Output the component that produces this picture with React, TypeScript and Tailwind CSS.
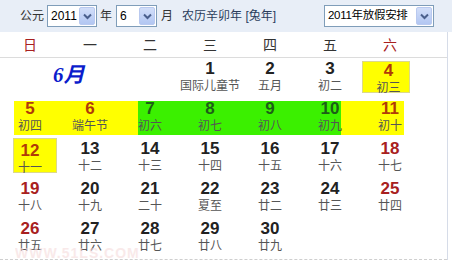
import React from "react";

type Cell = { d: number; l: string; kind?: "red" | "hl" | "green" };

const FONT = "font-['Liberation_Sans','Noto_Sans_CJK_SC',sans-serif]";

function Chevron() {
  return (
    <svg width="9" height="7" viewBox="0 0 9 7">
      <path d="M1 1.5 L4.5 5 L8 1.5" fill="none" stroke="#4a5f8c" strokeWidth="2" />
    </svg>
  );
}

function FakeSelect({ value, w, textSize }: { value: string; w: string; textSize: string }) {
  return (
    <div className={`flex h-[22px] items-center justify-between border border-[#7f9db9] bg-white pl-[3px] pr-[1px] ${w}`}>
      <span className={`whitespace-nowrap leading-none text-black ${textSize}`}>{value}</span>
      <span className="flex h-[18px] w-[16px] shrink-0 items-center justify-center rounded-[2px] border border-[#b9c9ef] bg-[linear-gradient(#d2def9,#b2c6f2)]">
        <Chevron />
      </span>
    </div>
  );
}

function numColor(c: Cell) {
  if (c.kind === "hl") return "text-[#b03a08]";
  if (c.kind === "green") return "text-[#1d5e18]";
  if (c.kind === "red") return "text-[#a82020]";
  return "text-[#222]";
}

function DayContent({ c }: { c: Cell }) {
  return (
    <>
      <span className={`text-[17px] font-bold leading-[18px] ${numColor(c)}`}>{c.d}</span>
      <span className="mt-[1px] text-[12px] leading-[14px] text-[#555]">{c.l}</span>
    </>
  );
}

function DayCell({ c }: { c: Cell }) {
  return (
    <div className="flex h-[40px] flex-col items-center pt-[2px]">
      <DayContent c={c} />
    </div>
  );
}

const row2: Cell[] = [
  { d: 5, l: "初四", kind: "hl" },
  { d: 6, l: "端午节", kind: "hl" },
  { d: 7, l: "初六", kind: "green" },
  { d: 8, l: "初七", kind: "green" },
  { d: 9, l: "初八", kind: "green" },
  { d: 10, l: "初九", kind: "green" },
  { d: 11, l: "初十", kind: "hl" },
];

const row3: Cell[] = [
  { d: 13, l: "十二" },
  { d: 14, l: "十三" },
  { d: 15, l: "十四" },
  { d: 16, l: "十五" },
  { d: 17, l: "十六" },
  { d: 18, l: "十七", kind: "red" },
];

const row4: Cell[] = [
  { d: 19, l: "十八", kind: "red" },
  { d: 20, l: "十九" },
  { d: 21, l: "二十" },
  { d: 22, l: "夏至" },
  { d: 23, l: "廿二" },
  { d: 24, l: "廿三" },
  { d: 25, l: "廿四", kind: "red" },
];

const row5: Cell[] = [
  { d: 26, l: "廿五", kind: "red" },
  { d: 27, l: "廿六" },
  { d: 28, l: "廿七" },
  { d: 29, l: "廿八" },
  { d: 30, l: "廿九" },
];

const weekdays = ["日", "一", "二", "三", "四", "五", "六"];

export default function App() {
  return (
    <div className={`relative h-[262px] w-[452px] overflow-hidden bg-white ${FONT}`}>
      {/* header bar */}
      <div className="flex h-[32px] items-center bg-[#e8eef7] pl-[20px] pr-[18px] text-[12px] text-[#333]">
        <span>公元</span>
        <div className="ml-[3px]">
          <FakeSelect value="2011" w="w-[50px]" textSize="text-[12px]" />
        </div>
        <span className="ml-[3px]">年</span>
        <div className="ml-[4px]">
          <FakeSelect value="6" w="w-[41px]" textSize="text-[12px]" />
        </div>
        <span className="ml-[4px]">月</span>
        <span className="ml-[9px] text-[#2b3d5c]">农历辛卯年 [兔年]</span>
        <div className="ml-auto">
          <FakeSelect value="2011年放假安排" w="w-[110px]" textSize="text-[11.5px] tracking-[-0.3px]" />
        </div>
      </div>

      {/* body */}
      <div className="w-[448px] border-r border-[#d6dce8]">
        <div className="grid h-[26px] grid-cols-[repeat(7,60px)] items-center border-b border-[#dcdcdc] text-[14px]">
          {weekdays.map((w, i) => (
            <div
              key={w}
              className={`text-center leading-none ${i === 0 || i === 6 ? "text-[#a82020]" : "text-[#333]"}`}
            >
              {w}
            </div>
          ))}
        </div>

        {/* row 1 */}
        <div className="grid h-[40px] grid-cols-[repeat(7,60px)]">
          <div className="col-span-3 pl-[53px] pt-[5px]">
            <span className="font-['Liberation_Serif','Noto_Sans_CJK_SC',serif] text-[21px] font-bold italic leading-[24px] text-[#0b1ccc]">
              6月
            </span>
          </div>
          <DayCell c={{ d: 1, l: "国际儿童节" }} />
          <DayCell c={{ d: 2, l: "五月" }} />
          <DayCell c={{ d: 3, l: "初二" }} />
          <div className="pt-[3px]">
            <div className="ml-[2px] flex h-[32px] w-[48px] flex-col items-center border border-[#dcd98a] bg-[#ffff00] pl-[5px]">
              <DayContent c={{ d: 4, l: "初三", kind: "hl" }} />
            </div>
          </div>
        </div>

        {/* row 2 */}
        <div className="grid h-[40px] grid-cols-[repeat(7,60px)] bg-[linear-gradient(to_right,transparent_14px,#ffff00_14px,#ffff00_138px,#3bf000_138px,#3bf000_341px,#ffff00_341px,#ffff00_404px,transparent_404px)] bg-[length:100%_34px] bg-[position:0_3px] bg-no-repeat">
          {row2.map((c) => (
            <div key={c.d} className="flex h-[40px] flex-col items-center pt-[2px]">
              <DayContent c={c} />
            </div>
          ))}
        </div>

        {/* row 3 */}
        <div className="grid h-[40px] grid-cols-[repeat(7,60px)]">
          <div>
            <div className="ml-[13px] flex h-[35px] w-[44px] flex-col items-center border border-[#dcd98a] bg-[#ffff00] pr-[10px] pt-[3px]">
              <DayContent c={{ d: 12, l: "十一", kind: "hl" }} />
            </div>
          </div>
          {row3.map((c) => (
            <DayCell key={c.d} c={c} />
          ))}
        </div>

        {/* row 4 */}
        <div className="grid h-[40px] grid-cols-[repeat(7,60px)]">
          {row4.map((c) => (
            <DayCell key={c.d} c={c} />
          ))}
        </div>

        {/* row 5 */}
        <div className="grid h-[42px] grid-cols-[repeat(7,60px)] border-b border-dashed border-[#cfcfcf]">
          {row5.map((c) => (
            <DayCell key={c.d} c={c} />
          ))}
        </div>
      </div>

      {/* watermark */}
      <div className="pointer-events-none absolute left-[15px] top-[243px] text-[14px] font-bold tracking-[1px] text-[#f6dcdc] opacity-60">
        WWW.51LS.COM
      </div>
    </div>
  );
}
